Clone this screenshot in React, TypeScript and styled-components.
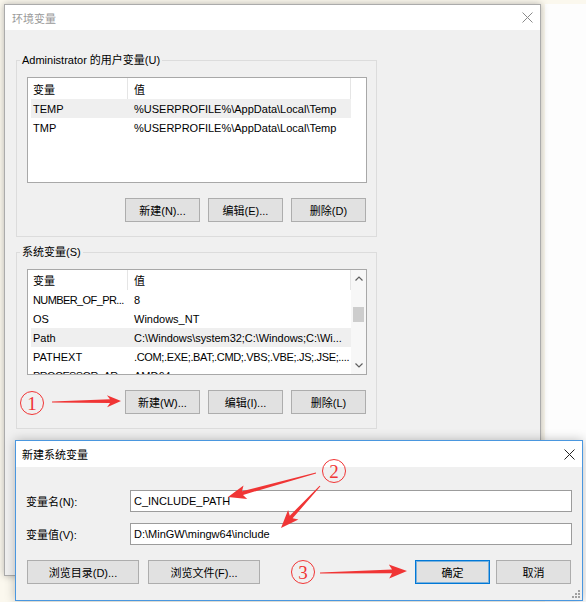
import React from "react";
import styled, { createGlobalStyle } from "styled-components";

const RED = "#f03535";

const GlobalStyle = createGlobalStyle`
  html, body { margin: 0; padding: 0; }
  body {
    background: #fbf8ee;
    font-family: "Liberation Sans", "Noto Sans CJK SC", sans-serif;
    font-size: 11px;
    color: #000;
  }
  * { box-sizing: border-box; }
`;

const Desktop = styled.div`
  position: relative;
  width: 586px;
  height: 602px;
  overflow: hidden;
  display: flex;
  align-items: flex-start;
  padding: 4px 0 0 4px;
`;

const Backdrop = styled.div`
  flex: 1;
  align-self: stretch;
  margin-left: 4px;
  background: #fdfdfd;
`;

const Window = styled.div`
  position: relative;
  z-index: 1;
  width: 537px;
  height: 572px;
  display: flex;
  flex-direction: column;
  border: 1px solid #ababab;
  background: #f0f0f0;
  box-shadow: 0 0 7px rgba(0, 0, 0, 0.28);
`;

const TitleBar = styled.div<{ $active?: boolean }>`
  flex: none;
  height: ${(p) => (p.$active ? 26 : 25)}px;
  background: #fff;
  display: flex;
  align-items: center;
  justify-content: space-between;
  padding-left: ${(p) => (p.$active ? 6 : 7)}px;
  color: ${(p) => (p.$active ? "#000" : "#9a9a9a")};
`;

const CloseBox = styled.div`
  width: 26px;
  height: 100%;
  display: flex;
  align-items: center;
  justify-content: center;
`;

const WindowBody = styled.div`
  flex: 1;
  display: flex;
  flex-direction: column;
  gap: 7px;
  padding: 22px 0 0 11px;
`;

const Group = styled.fieldset`
  width: 361px;
  margin: 0;
  padding: 9px 9px 14px 10px;
  border: 1px solid #dcdcdc;
  min-inline-size: 0;
`;

const Legend = styled.legend`
  margin-left: -7px;
  padding: 0 2px;
  line-height: 16px;
  color: #000;
`;

const ListView = styled.div`
  width: 340px;
  height: 106px;
  border: 1px solid #a8a8a8;
  background: #fff;
  display: flex;
  overflow: hidden;
`;

const ListContent = styled.div`
  width: 323px;
  flex: none;
  padding-left: 3px;
  overflow: hidden;
`;

const HeaderRow = styled.div<{ $h: number }>`
  display: grid;
  grid-template-columns: 97px 1fr;
  height: ${(p) => p.$h}px;
`;

const HeaderCell = styled.div<{ $pad: number }>`
  display: flex;
  align-items: center;
  padding-left: ${(p) => p.$pad}px;
  border-right: 1px solid #e5e5e5;
`;

const Row = styled.div<{ $selected?: boolean }>`
  display: grid;
  grid-template-columns: 97px 1fr;
  height: 19px;
  align-items: center;
  background: ${(p) => (p.$selected ? "#efefef" : "transparent")};
  white-space: nowrap;
`;

const Cell = styled.div<{ $pad: number; $tight?: number }>`
  padding-left: ${(p) => p.$pad}px;
  letter-spacing: ${(p) => p.$tight ?? 0}px;
  overflow: hidden;
`;

const Scrollbar = styled.div`
  flex: 1;
  display: flex;
  flex-direction: column;
  background: #f7f7f7;
`;

const ScrollArrow = styled.div`
  height: 17px;
  display: flex;
  align-items: center;
  justify-content: center;
`;

const ScrollTrack = styled.div`
  flex: 1;
  padding: 0 2px;
`;

const Thumb = styled.div`
  height: 15px;
  background: #cdcdcd;
`;

const ButtonRow = styled.div<{ $top: number }>`
  display: flex;
  gap: 8px;
  justify-content: flex-end;
  margin-top: ${(p) => p.$top}px;
  padding-right: 1px;
`;

const Button = styled.button<{ $w: number; $default?: boolean }>`
  width: ${(p) => p.$w}px;
  height: 24px;
  padding: 0;
  font: inherit;
  color: #000;
  background: #e1e1e1;
  border: 1px solid ${(p) => (p.$default ? "#0078d7" : "#adadad")};
  box-shadow: ${(p) => (p.$default ? "inset 0 0 0 1px rgba(0, 120, 215, 0.45)" : "none")};
`;

const Dialog = styled.div`
  position: absolute;
  z-index: 2;
  left: 15px;
  top: 440px;
  width: 568px;
  height: 161px;
  display: flex;
  flex-direction: column;
  border: 1px solid #4a97df;
  background: #f0f0f0;
  box-shadow: 0 0 10px rgba(0, 0, 0, 0.25);
`;

const DialogBody = styled.div`
  flex: 1;
  display: flex;
  flex-direction: column;
  gap: 11px;
  padding: 23px 10px 0 10px;
`;

const FormRow = styled.div`
  display: flex;
  align-items: center;
  height: 22px;
`;

const FieldLabel = styled.label`
  width: 104px;
  flex: none;
`;

const TextInput = styled.input`
  flex: 1;
  height: 22px;
  padding: 0 0 0 3px;
  font: inherit;
  color: #000;
  background: #fff;
  border: 1px solid #9c9c9c;
  outline: none;
`;

const DialogButtons = styled.div`
  display: flex;
  align-items: center;
  gap: 9px;
  margin-top: 4px;
  padding: 0 1px;
`;

const Spacer = styled.div`
  flex: 1;
`;

const OkGroup = styled.div`
  display: flex;
  gap: 6px;
`;

const Grip = styled.svg`
  position: absolute;
  right: 2px;
  bottom: 2px;
`;

const Overlay = styled.svg`
  position: absolute;
  left: 0;
  top: 0;
  z-index: 3;
  pointer-events: none;
`;

const CircleNum = styled.span<{ $x: number; $y: number }>`
  position: absolute;
  z-index: 3;
  left: ${(p) => p.$x}px;
  top: ${(p) => p.$y}px;
  width: 24px;
  height: 24px;
  border: 1.5px solid ${RED};
  border-radius: 50%;
  display: flex;
  align-items: center;
  justify-content: center;
  color: ${RED};
  font-family: "Liberation Serif", serif;
  font-size: 19px;
  line-height: 1;
`;

function CloseIcon({ color }: { color: string }) {
  return (
    <svg width="11" height="11" viewBox="0 0 11 11">
      <path d="M0.5 0.5 L10.5 10.5 M10.5 0.5 L0.5 10.5" stroke={color} strokeWidth="1" fill="none" />
    </svg>
  );
}

function Chevron({ up }: { up?: boolean }) {
  return (
    <svg width="8" height="5" viewBox="0 0 8 5">
      <path
        d={up ? "M0.5 4.5 L4 1 L7.5 4.5" : "M0.5 0.5 L4 4 L7.5 0.5"}
        stroke="#606060"
        strokeWidth="1.2"
        fill="none"
      />
    </svg>
  );
}

function arrowPoints(
  x1: number,
  y1: number,
  x2: number,
  y2: number,
  head: number,
  hw: number,
  w0 = 0.5,
  w1 = 1.9
) {
  const dx = x2 - x1;
  const dy = y2 - y1;
  const len = Math.hypot(dx, dy);
  const ux = dx / len;
  const uy = dy / len;
  const nx = -uy;
  const ny = ux;
  const bx = x2 - ux * head;
  const by = y2 - uy * head;
  const jx = x2 - ux * (head - 3);
  const jy = y2 - uy * (head - 3);
  const pts: [number, number][] = [
    [x1 + nx * w0, y1 + ny * w0],
    [jx + nx * w1, jy + ny * w1],
    [bx + nx * hw, by + ny * hw],
    [x2, y2],
    [bx - nx * hw, by - ny * hw],
    [jx - nx * w1, jy - ny * w1],
    [x1 - nx * w0, y1 - ny * w0],
  ];
  return pts.map(([a, b]) => `${a.toFixed(1)},${b.toFixed(1)}`).join(" ");
}

const arrows = [
  { x1: 52, y1: 402, x2: 121, y2: 401, head: 14, hw: 6 },
  { x1: 316, y1: 473, x2: 228, y2: 497, head: 18, hw: 7 },
  { x1: 320, y1: 486, x2: 281, y2: 528, head: 18, hw: 7 },
  { x1: 320, y1: 573, x2: 407, y2: 571, head: 18, hw: 7 },
];

type Var = { name: string; value: string; selected?: boolean; nameTight?: number; valueTight?: number };

const userVars: Var[] = [
  { name: "TEMP", value: "%USERPROFILE%\\AppData\\Local\\Temp", selected: true },
  { name: "TMP", value: "%USERPROFILE%\\AppData\\Local\\Temp" },
];

const sysVars: Var[] = [
  { name: "NUMBER_OF_PR...", value: "8", nameTight: -0.6 },
  { name: "OS", value: "Windows_NT" },
  { name: "Path", value: "C:\\Windows\\system32;C:\\Windows;C:\\Wi...", selected: true, valueTight: -0.05 },
  { name: "PATHEXT", value: ".COM;.EXE;.BAT;.CMD;.VBS;.VBE;.JS;.JSE;....", valueTight: -0.35 },
  { name: "PROCESSOR_AR...", value: "AMD64", nameTight: -0.6 },
];

function VarList({ vars, headH, scroll }: { vars: Var[]; headH: number; scroll?: boolean }) {
  return (
    <ListView>
      <ListContent>
        <HeaderRow $h={headH}>
          <HeaderCell $pad={2}>变量</HeaderCell>
          <HeaderCell $pad={6}>值</HeaderCell>
        </HeaderRow>
        {vars.map((v) => (
          <Row key={v.name} $selected={v.selected}>
            <Cell $pad={2} $tight={v.nameTight}>
              {v.name}
            </Cell>
            <Cell $pad={6} $tight={v.valueTight}>
              {v.value}
            </Cell>
          </Row>
        ))}
      </ListContent>
      {scroll ? (
        <Scrollbar>
          <ScrollArrow>
            <Chevron up />
          </ScrollArrow>
          <ScrollTrack>
            <Thumb style={{ marginTop: 20 }} />
          </ScrollTrack>
          <ScrollArrow>
            <Chevron />
          </ScrollArrow>
        </Scrollbar>
      ) : null}
    </ListView>
  );
}

export default function App() {
  return (
    <>
      <GlobalStyle />
      <Desktop>
        <Window>
          <TitleBar>
            <span>环境变量</span>
            <CloseBox>
              <CloseIcon color="#8a8a8a" />
            </CloseBox>
          </TitleBar>
          <WindowBody>
            <Group>
              <Legend>Administrator 的用户变量(U)</Legend>
              <VarList vars={userVars} headH={21} />
              <ButtonRow $top={15}>
                <Button $w={75}>新建(N)...</Button>
                <Button $w={75}>编辑(E)...</Button>
                <Button $w={75}>删除(D)</Button>
              </ButtonRow>
            </Group>
            <Group>
              <Legend>系统变量(S)</Legend>
              <VarList vars={sysVars} headH={20} scroll />
              <ButtonRow $top={15}>
                <Button $w={75}>新建(W)...</Button>
                <Button $w={75}>编辑(I)...</Button>
                <Button $w={75}>删除(L)</Button>
              </ButtonRow>
            </Group>
          </WindowBody>
        </Window>
        <Backdrop />

        <Dialog>
          <TitleBar $active>
            <span>新建系统变量</span>
            <CloseBox>
              <CloseIcon color="#222" />
            </CloseBox>
          </TitleBar>
          <DialogBody>
            <FormRow>
              <FieldLabel>变量名(N):</FieldLabel>
              <TextInput defaultValue="C_INCLUDE_PATH" />
            </FormRow>
            <FormRow>
              <FieldLabel>变量值(V):</FieldLabel>
              <TextInput defaultValue={"D:\\MinGW\\mingw64\\include"} />
            </FormRow>
            <DialogButtons>
              <Button $w={112}>浏览目录(D)...</Button>
              <Button $w={112}>浏览文件(F)...</Button>
              <Spacer />
              <OkGroup>
                <Button $w={75} $default>
                  确定
                </Button>
                <Button $w={75}>取消</Button>
              </OkGroup>
            </DialogButtons>
          </DialogBody>
          <Grip width="8" height="8" viewBox="0 0 8 8">
            <g fill="#a0a0a0">
              <rect x="6" y="0" width="2" height="2" />
              <rect x="3" y="3" width="2" height="2" />
              <rect x="6" y="3" width="2" height="2" />
              <rect x="0" y="6" width="2" height="2" />
              <rect x="3" y="6" width="2" height="2" />
              <rect x="6" y="6" width="2" height="2" />
            </g>
          </Grip>
        </Dialog>

        <Overlay width="586" height="602" viewBox="0 0 586 602">
          {arrows.map((a, i) => (
            <polygon key={i} points={arrowPoints(a.x1, a.y1, a.x2, a.y2, a.head, a.hw)} fill={RED} />
          ))}
        </Overlay>
        <CircleNum $x={20} $y={391}>1</CircleNum>
        <CircleNum $x={322} $y={459}>2</CircleNum>
        <CircleNum $x={291} $y={560}>3</CircleNum>
      </Desktop>
    </>
  );
}
